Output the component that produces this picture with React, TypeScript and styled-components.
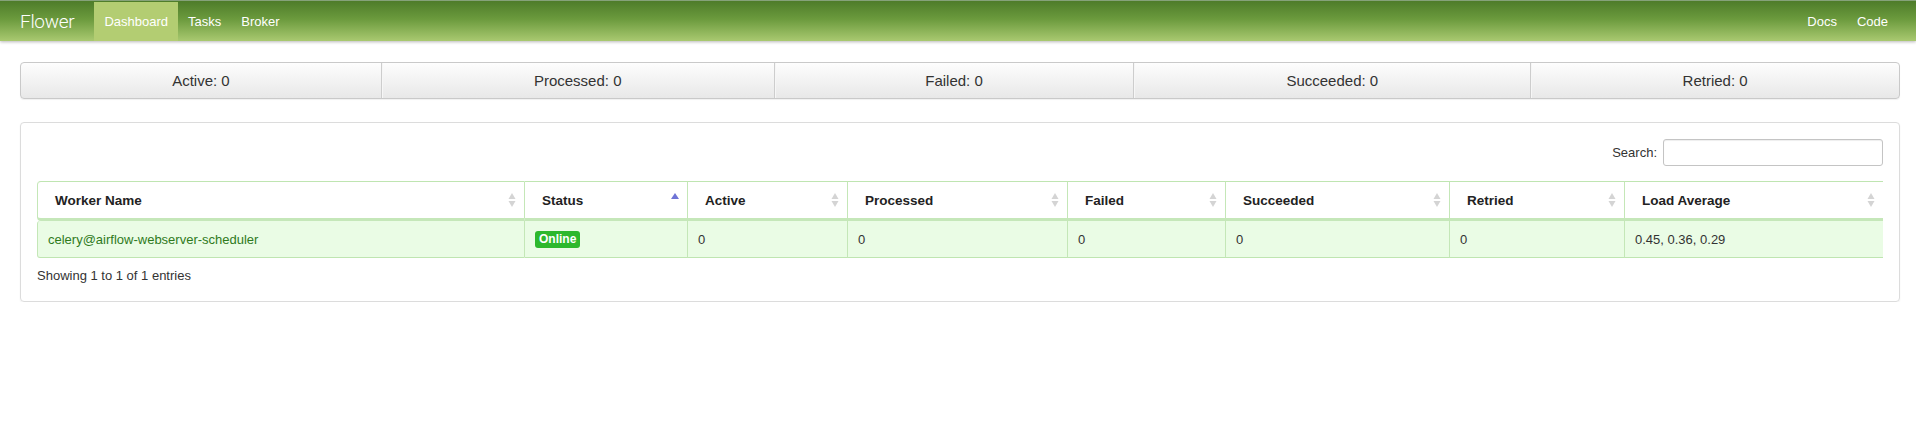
import React from "react";
import styled, { createGlobalStyle } from "styled-components";

const GlobalStyle = createGlobalStyle`
  html, body { margin: 0; padding: 0; background: #fff; }
  body {
    font-family: "Liberation Sans", Arial, Helvetica, sans-serif;
    font-size: 13px;
    color: #333;
  }
  * { box-sizing: border-box; }
`;

const NavBar = styled.header`
  height: 41px;
  display: flex;
  align-items: stretch;
  justify-content: space-between;
  padding: 0 18px 0 20px;
  background: linear-gradient(to bottom, #4e7c2a 0%, #6b9a3d 45%, #a9c970 100%);
  border-top: 1px solid #86a27a;
  box-shadow: 0 1px 3px rgba(0, 0, 0, 0.28);
`;

const NavGroup = styled.nav`
  display: flex;
  align-items: stretch;
`;

const Brand = styled.a`
  display: flex;
  align-items: center;
  font-family: Roboto, "Liberation Sans", sans-serif;
  font-weight: 300;
  font-size: 19px;
  color: #fff;
  margin-right: 20px;
  text-decoration: none;
  letter-spacing: -0.3px;
`;

const NavLink = styled.a<{ $active?: boolean }>`
  display: flex;
  align-items: center;
  padding: 0 10px;
  margin-top: 1px;
  color: #fff;
  text-decoration: none;
  font-size: 13px;
  background: ${(p) => (p.$active ? "#b3cd72" : "transparent")};
`;

const Main = styled.main`
  padding: 21px 16px 0 20px;
`;

const StatsBar = styled.div`
  display: flex;
  height: 37px;
  border: 1px solid #c9c9c9;
  border-radius: 4px;
  overflow: hidden;
  background: linear-gradient(to bottom, #fdfdfd 0%, #e8e8e8 100%);
  box-shadow: 0 1px 1px rgba(0, 0, 0, 0.06);
`;

const StatButton = styled.div<{ $grow: number }>`
  flex: ${(p) => p.$grow} 1 0;
  display: flex;
  align-items: center;
  justify-content: center;
  font-size: 15px;
  color: #333;
  & + & {
    border-left: 1px solid #cdcdcd;
    box-shadow: inset 1px 0 0 #f6f6f6;
  }
`;

const Panel = styled.section`
  margin-top: 23px;
  border: 1px solid #dcdcdc;
  border-radius: 4px;
  padding: 16px 16px 16px 16px;
  box-shadow: 0 1px 2px rgba(0, 0, 0, 0.06);
`;

const SearchRow = styled.div`
  display: flex;
  justify-content: flex-end;
  align-items: center;
  gap: 6px;
`;

const SearchLabel = styled.label`
  font-size: 13px;
  color: #333;
`;

const SearchInput = styled.input`
  width: 220px;
  height: 27px;
  border: 1px solid #c4c4c4;
  border-radius: 3px;
  box-shadow: inset 0 1px 1px rgba(0, 0, 0, 0.07);
  font-family: inherit;
  font-size: 13px;
  padding: 3px 6px;
`;

const Table = styled.table`
  margin-top: 15px;
  width: 100%;
  table-layout: fixed;
  border-collapse: separate;
  border-spacing: 0;
`;

const Col = styled.col<{ $w: number }>`
  width: ${(p) => p.$w}px;
`;

const HeadCell = styled.th`
  position: relative;
  text-align: left;
  font-weight: bold;
  font-size: 13.5px;
  color: #222;
  height: 40px;
  padding: 0 24px 0 17px;
  border-top: 1px solid #bfe5b1;
  border-bottom: 3px solid #c5e7b9;
  border-right: 1px solid #c4e7b7;
  background: #fff;
  &:first-child {
    border-left: 1px solid #c4e7b7;
    border-top-left-radius: 4px;
    border-bottom-left-radius: 4px;
  }
  &:last-child { border-right: none; }
`;

const SortIcon = styled.svg`
  position: absolute;
  right: 8px;
  top: 50%;
  transform: translateY(-50%);
`;

const BodyCell = styled.td`
  height: 37px;
  padding: 0 10px;
  font-size: 13px;
  color: #333;
  background: #eafce5;
  border-bottom: 1px solid #bfe5b1;
  border-right: 1px solid #c4e7b7;
  white-space: nowrap;
  &:first-child {
    border-left: 1px solid #c4e7b7;
    border-top-left-radius: 3px;
    border-bottom-left-radius: 3px;
  }
  &:last-child { border-right: none; }
`;

const WorkerLink = styled.a`
  color: #2f7a1c;
  text-decoration: none;
`;

const StatusBadge = styled.span`
  display: inline-block;
  background: #2db82d;
  color: #fff;
  font-weight: bold;
  font-size: 12px;
  line-height: 17px;
  padding: 0 4px;
  border-radius: 3px;
`;

const Info = styled.div`
  margin-top: 9px;
  font-size: 13px;
  line-height: 18px;
  color: #333;
`;

type Sort = "both" | "asc";

const SortArrows: React.FC<{ mode: Sort }> = ({ mode }) =>
  mode === "asc" ? (
    <SortIcon width="8" height="20" viewBox="0 0 8 20">
      <polygon points="4,3 8,9 0,9" fill="#6f74d6" />
    </SortIcon>
  ) : (
    <SortIcon width="8" height="20" viewBox="0 0 8 20">
      <polygon points="4,3 7.5,9 0.5,9" fill="#d4d4d4" />
      <polygon points="0.5,11 7.5,11 4,17" fill="#d4d4d4" />
    </SortIcon>
  );

const stats = [
  { label: "Active", value: 0, grow: 361 },
  { label: "Processed", value: 0, grow: 393 },
  { label: "Failed", value: 0, grow: 360 },
  { label: "Succeeded", value: 0, grow: 397 },
  { label: "Retried", value: 0, grow: 369 },
];

const columns: { title: string; width: number; sort: Sort }[] = [
  { title: "Worker Name", width: 488, sort: "both" },
  { title: "Status", width: 163, sort: "asc" },
  { title: "Active", width: 160, sort: "both" },
  { title: "Processed", width: 220, sort: "both" },
  { title: "Failed", width: 158, sort: "both" },
  { title: "Succeeded", width: 224, sort: "both" },
  { title: "Retried", width: 175, sort: "both" },
  { title: "Load Average", width: 258, sort: "both" },
];

export default function App() {
  return (
    <>
      <GlobalStyle />
      <NavBar>
        <NavGroup>
          <Brand href="#">Flower</Brand>
          <NavLink $active href="#">Dashboard</NavLink>
          <NavLink href="#">Tasks</NavLink>
          <NavLink href="#">Broker</NavLink>
        </NavGroup>
        <NavGroup>
          <NavLink href="#">Docs</NavLink>
          <NavLink href="#">Code</NavLink>
        </NavGroup>
      </NavBar>
      <Main>
        <StatsBar>
          {stats.map((s) => (
            <StatButton key={s.label} $grow={s.grow}>
              {s.label}: {s.value}
            </StatButton>
          ))}
        </StatsBar>
        <Panel>
          <SearchRow>
            <SearchLabel htmlFor="search">Search:</SearchLabel>
            <SearchInput id="search" type="text" />
          </SearchRow>
          <Table>
            <colgroup>
              {columns.map((c) => (
                <Col key={c.title} $w={c.width} />
              ))}
            </colgroup>
            <thead>
              <tr>
                {columns.map((c) => (
                  <HeadCell key={c.title}>
                    {c.title}
                    <SortArrows mode={c.sort} />
                  </HeadCell>
                ))}
              </tr>
            </thead>
            <tbody>
              <tr>
                <BodyCell>
                  <WorkerLink href="#">celery@airflow-webserver-scheduler</WorkerLink>
                </BodyCell>
                <BodyCell>
                  <StatusBadge>Online</StatusBadge>
                </BodyCell>
                <BodyCell>0</BodyCell>
                <BodyCell>0</BodyCell>
                <BodyCell>0</BodyCell>
                <BodyCell>0</BodyCell>
                <BodyCell>0</BodyCell>
                <BodyCell>0.45, 0.36, 0.29</BodyCell>
              </tr>
            </tbody>
          </Table>
          <Info>Showing 1 to 1 of 1 entries</Info>
        </Panel>
      </Main>
    </>
  );
}
